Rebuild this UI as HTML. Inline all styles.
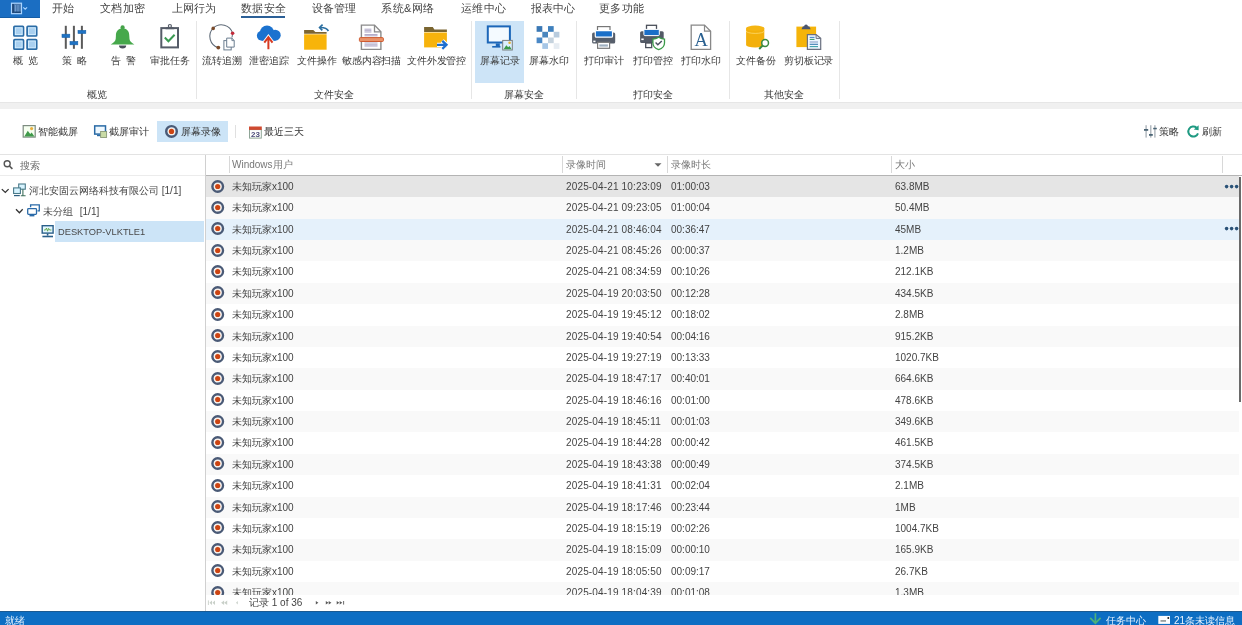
<!DOCTYPE html>
<html><head><meta charset="utf-8">
<style>
*{box-sizing:border-box;margin:0;padding:0}
html,body{width:1242px;height:625px;overflow:hidden;background:#fff;will-change:transform;font-family:"Liberation Sans",sans-serif;font-size:10px;color:#444}
.a{position:absolute}
.t{position:absolute;white-space:nowrap;line-height:12px}
.tab{position:absolute;top:2px;font-size:11px;line-height:13px;color:#444;letter-spacing:0.25px;white-space:nowrap}
.lbl{position:absolute;top:55px;line-height:12px;font-size:10px;color:#3a3a3a;letter-spacing:-0.25px;margin-left:0.4px;white-space:nowrap;text-align:center}
.glbl{position:absolute;top:89px;line-height:12px;font-size:10px;color:#3a3a3a;white-space:nowrap}
.vd{position:absolute;top:21px;width:1px;height:78px;background:#e6e6e6}
svg{position:absolute;overflow:visible}
.row{position:absolute;left:206px;width:1033px;height:21.37px}
.row .c{position:absolute;top:5px;line-height:12px;white-space:nowrap;color:#444}
.hd{position:absolute;top:159px;line-height:12px;color:#777;white-space:nowrap}
.hdv{position:absolute;top:156px;width:1px;height:17px;background:#d8d8d8}
</style></head><body>
<svg width="0" height="0" style="position:absolute"><defs><g id="rec"><circle cx="6.7" cy="6.5" r="5.3" fill="none" stroke="#4a5a76" stroke-width="2.4"/><circle cx="6.7" cy="6.5" r="3.6" fill="#fbefe6"/><circle cx="6.7" cy="6.5" r="2.6" fill="#cc4412"/></g></defs></svg>

<!-- menu button -->
<div class="a" style="left:0;top:0;width:40px;height:18px;background:#1b6ec2;border-bottom:1px solid #155da6"></div>
<svg style="left:0;top:0" width="40" height="18">
 <rect x="11.5" y="3.2" width="10" height="10.5" fill="#4a78ad" stroke="#a9d4ff" stroke-width="1.2"/>
 <rect x="12.4" y="4" width="1.3" height="9" fill="#0f3565"/>
 <path d="M15.5 5 V12 M18 5 V12" stroke="#7aa5d5" stroke-width="0.8"/>
 <rect x="14.2" y="11.6" width="6.5" height="1.2" fill="#123c6e"/>
 <path d="M23.3 7.3 L25.2 9.2 L27.1 7.3" fill="none" stroke="#a9d4ff" stroke-width="1.1"/>
</svg>

<!-- tabs -->
<div class="tab" style="left:52px">开始</div>
<div class="tab" style="left:100px">文档加密</div>
<div class="tab" style="left:171.5px">上网行为</div>
<div class="tab" style="left:241px">数据安全</div>
<div class="a" style="left:241px;top:16px;width:44px;height:2px;background:#2b5f96"></div>
<div class="tab" style="left:311.5px">设备管理</div>
<div class="tab" style="left:381px;letter-spacing:0.5px">系统&amp;网络</div>
<div class="tab" style="left:461px">运维中心</div>
<div class="tab" style="left:530.5px">报表中心</div>
<div class="tab" style="left:599px">更多功能</div>

<!-- ribbon -->
<div class="a" style="left:475px;top:21px;width:49px;height:62px;background:#cde4f7"></div>
<div class="vd" style="left:196px"></div>
<div class="vd" style="left:471px"></div>
<div class="vd" style="left:576px"></div>
<div class="vd" style="left:729px"></div>
<div class="vd" style="left:839px"></div>

<div class="lbl" style="left:13px;letter-spacing:1px">概 览</div>
<div class="lbl" style="left:62px;letter-spacing:1px">策 略</div>
<div class="lbl" style="left:111px;letter-spacing:1px">告 警</div>
<div class="lbl" style="left:150px">审批任务</div>
<div class="lbl" style="left:202px">流转追溯</div>
<div class="lbl" style="left:249px">泄密追踪</div>
<div class="lbl" style="left:297px">文件操作</div>
<div class="lbl" style="left:342px">敏感内容扫描</div>
<div class="lbl" style="left:407px">文件外发管控</div>
<div class="lbl" style="left:480px">屏幕记录</div>
<div class="lbl" style="left:529px">屏幕水印</div>
<div class="lbl" style="left:584px">打印审计</div>
<div class="lbl" style="left:633px">打印管控</div>
<div class="lbl" style="left:681px">打印水印</div>
<div class="lbl" style="left:736px">文件备份</div>
<div class="lbl" style="left:784px">剪切板记录</div>

<div class="glbl" style="left:87px">概览</div>
<div class="glbl" style="left:314px">文件安全</div>
<div class="glbl" style="left:504px">屏幕安全</div>
<div class="glbl" style="left:633px">打印安全</div>
<div class="glbl" style="left:764px">其他安全</div>

<!-- ICONS_RIBBON -->

<!-- band -->
<div class="a" style="left:0;top:102px;width:1242px;height:7px;background:#f0f0f0;border-top:1px solid #e6e6e6"></div>

<!-- toolbar -->
<div class="a" style="left:157px;top:121px;width:71px;height:21px;background:#cce4f7"></div>
<div class="a" style="left:235px;top:125px;width:1px;height:13px;background:#e0e0e0"></div>
<div class="t" style="left:38px;top:126px;color:#333">智能截屏</div>
<div class="t" style="left:109px;top:126px;color:#333">截屏审计</div>
<div class="t" style="left:181px;top:126px;color:#333">屏幕录像</div>
<div class="t" style="left:264px;top:126px;color:#333">最近三天</div>
<div class="t" style="left:1159px;top:126px;color:#333">策略</div>
<div class="t" style="left:1202px;top:126px;color:#333">刷新</div>
<!-- ICONS_TOOLBAR -->

<!-- lines -->
<div class="a" style="left:0;top:154px;width:1242px;height:1px;background:#e3e3e3"></div>

<!-- left panel -->
<div class="t" style="left:20px;top:160px;color:#6a6a6a">搜索</div>
<div class="a" style="left:0;top:175px;width:205px;height:1px;background:#ececec"></div>
<div class="t" style="left:29px;top:185px;color:#444">河北安固云网络科技有限公司 [1/1]</div>
<div class="t" style="left:43px;top:205.5px;color:#444">未分组 <span style="margin-left:4px">[1/1]</span></div>
<div class="a" style="left:55px;top:221px;width:149px;height:21px;background:#cce4f7"></div>
<div class="t" style="left:58px;top:226px;font-size:9.3px;color:#484848">DESKTOP-VLKTLE1</div>
<!-- ICONS_TREE -->

<!-- splitter -->
<div class="a" style="left:205px;top:155px;width:1px;height:456px;background:#d0d0d0"></div>

<!-- table header -->
<div class="hdv" style="left:229px"></div>
<div class="hdv" style="left:562px"></div>
<div class="hdv" style="left:667px"></div>
<div class="hdv" style="left:891px"></div>
<div class="hdv" style="left:1222px"></div>
<div class="hd" style="left:232px">Windows用户</div>
<div class="hd" style="left:566px">录像时间</div>
<div class="hd" style="left:671px">录像时长</div>
<div class="hd" style="left:895px">大小</div>
<svg style="left:654px;top:163px" width="8" height="4"><path d="M0.5 0.3 L7.5 0.3 L4 3.8Z" fill="#666"/></svg>
<div class="a" style="left:206px;top:175px;width:1036px;height:1px;background:#b4b4b4"></div>

<!-- rows -->
<div class="a" id="rows" style="left:0;top:0;width:1242px;height:595px;overflow:hidden">
<div class="row" style="top:176.00px;background:#e5e5e5"><svg class="rec" style="left:5px;top:3.5px" width="14" height="14"><use href="#rec"/></svg><div class="c" style="left:26px">未知玩家x100</div><div class="c" style="left:360px;letter-spacing:0.15px">2025-04-21 10:23:09</div><div class="c" style="left:465px">01:00:03</div><div class="c" style="left:689px">63.8MB</div><svg class="dots" style="left:1019px;top:8.5px" width="14" height="4"><circle cx="1.6" cy="1.6" r="1.8" fill="#2a5277"/><circle cx="6.6" cy="1.6" r="1.8" fill="#2a5277"/><circle cx="11.6" cy="1.6" r="1.8" fill="#2a5277"/></svg></div>
<div class="row" style="top:197.37px;background:#f9f9f9"><svg class="rec" style="left:5px;top:3.5px" width="14" height="14"><use href="#rec"/></svg><div class="c" style="left:26px">未知玩家x100</div><div class="c" style="left:360px;letter-spacing:0.15px">2025-04-21 09:23:05</div><div class="c" style="left:465px">01:00:04</div><div class="c" style="left:689px">50.4MB</div></div>
<div class="row" style="top:218.74px;background:#e5f1fb"><svg class="rec" style="left:5px;top:3.5px" width="14" height="14"><use href="#rec"/></svg><div class="c" style="left:26px">未知玩家x100</div><div class="c" style="left:360px;letter-spacing:0.15px">2025-04-21 08:46:04</div><div class="c" style="left:465px">00:36:47</div><div class="c" style="left:689px">45MB</div><svg class="dots" style="left:1019px;top:8.5px" width="14" height="4"><circle cx="1.6" cy="1.6" r="1.8" fill="#2a5277"/><circle cx="6.6" cy="1.6" r="1.8" fill="#2a5277"/><circle cx="11.6" cy="1.6" r="1.8" fill="#2a5277"/></svg></div>
<div class="row" style="top:240.11px;background:#f9f9f9"><svg class="rec" style="left:5px;top:3.5px" width="14" height="14"><use href="#rec"/></svg><div class="c" style="left:26px">未知玩家x100</div><div class="c" style="left:360px;letter-spacing:0.15px">2025-04-21 08:45:26</div><div class="c" style="left:465px">00:00:37</div><div class="c" style="left:689px">1.2MB</div></div>
<div class="row" style="top:261.48px;background:#ffffff"><svg class="rec" style="left:5px;top:3.5px" width="14" height="14"><use href="#rec"/></svg><div class="c" style="left:26px">未知玩家x100</div><div class="c" style="left:360px;letter-spacing:0.15px">2025-04-21 08:34:59</div><div class="c" style="left:465px">00:10:26</div><div class="c" style="left:689px">212.1KB</div></div>
<div class="row" style="top:282.85px;background:#f9f9f9"><svg class="rec" style="left:5px;top:3.5px" width="14" height="14"><use href="#rec"/></svg><div class="c" style="left:26px">未知玩家x100</div><div class="c" style="left:360px;letter-spacing:0.15px">2025-04-19 20:03:50</div><div class="c" style="left:465px">00:12:28</div><div class="c" style="left:689px">434.5KB</div></div>
<div class="row" style="top:304.22px;background:#ffffff"><svg class="rec" style="left:5px;top:3.5px" width="14" height="14"><use href="#rec"/></svg><div class="c" style="left:26px">未知玩家x100</div><div class="c" style="left:360px;letter-spacing:0.15px">2025-04-19 19:45:12</div><div class="c" style="left:465px">00:18:02</div><div class="c" style="left:689px">2.8MB</div></div>
<div class="row" style="top:325.59px;background:#f9f9f9"><svg class="rec" style="left:5px;top:3.5px" width="14" height="14"><use href="#rec"/></svg><div class="c" style="left:26px">未知玩家x100</div><div class="c" style="left:360px;letter-spacing:0.15px">2025-04-19 19:40:54</div><div class="c" style="left:465px">00:04:16</div><div class="c" style="left:689px">915.2KB</div></div>
<div class="row" style="top:346.96px;background:#ffffff"><svg class="rec" style="left:5px;top:3.5px" width="14" height="14"><use href="#rec"/></svg><div class="c" style="left:26px">未知玩家x100</div><div class="c" style="left:360px;letter-spacing:0.15px">2025-04-19 19:27:19</div><div class="c" style="left:465px">00:13:33</div><div class="c" style="left:689px">1020.7KB</div></div>
<div class="row" style="top:368.33px;background:#f9f9f9"><svg class="rec" style="left:5px;top:3.5px" width="14" height="14"><use href="#rec"/></svg><div class="c" style="left:26px">未知玩家x100</div><div class="c" style="left:360px;letter-spacing:0.15px">2025-04-19 18:47:17</div><div class="c" style="left:465px">00:40:01</div><div class="c" style="left:689px">664.6KB</div></div>
<div class="row" style="top:389.70px;background:#ffffff"><svg class="rec" style="left:5px;top:3.5px" width="14" height="14"><use href="#rec"/></svg><div class="c" style="left:26px">未知玩家x100</div><div class="c" style="left:360px;letter-spacing:0.15px">2025-04-19 18:46:16</div><div class="c" style="left:465px">00:01:00</div><div class="c" style="left:689px">478.6KB</div></div>
<div class="row" style="top:411.07px;background:#f9f9f9"><svg class="rec" style="left:5px;top:3.5px" width="14" height="14"><use href="#rec"/></svg><div class="c" style="left:26px">未知玩家x100</div><div class="c" style="left:360px;letter-spacing:0.15px">2025-04-19 18:45:11</div><div class="c" style="left:465px">00:01:03</div><div class="c" style="left:689px">349.6KB</div></div>
<div class="row" style="top:432.44px;background:#ffffff"><svg class="rec" style="left:5px;top:3.5px" width="14" height="14"><use href="#rec"/></svg><div class="c" style="left:26px">未知玩家x100</div><div class="c" style="left:360px;letter-spacing:0.15px">2025-04-19 18:44:28</div><div class="c" style="left:465px">00:00:42</div><div class="c" style="left:689px">461.5KB</div></div>
<div class="row" style="top:453.81px;background:#f9f9f9"><svg class="rec" style="left:5px;top:3.5px" width="14" height="14"><use href="#rec"/></svg><div class="c" style="left:26px">未知玩家x100</div><div class="c" style="left:360px;letter-spacing:0.15px">2025-04-19 18:43:38</div><div class="c" style="left:465px">00:00:49</div><div class="c" style="left:689px">374.5KB</div></div>
<div class="row" style="top:475.18px;background:#ffffff"><svg class="rec" style="left:5px;top:3.5px" width="14" height="14"><use href="#rec"/></svg><div class="c" style="left:26px">未知玩家x100</div><div class="c" style="left:360px;letter-spacing:0.15px">2025-04-19 18:41:31</div><div class="c" style="left:465px">00:02:04</div><div class="c" style="left:689px">2.1MB</div></div>
<div class="row" style="top:496.55px;background:#f9f9f9"><svg class="rec" style="left:5px;top:3.5px" width="14" height="14"><use href="#rec"/></svg><div class="c" style="left:26px">未知玩家x100</div><div class="c" style="left:360px;letter-spacing:0.15px">2025-04-19 18:17:46</div><div class="c" style="left:465px">00:23:44</div><div class="c" style="left:689px">1MB</div></div>
<div class="row" style="top:517.92px;background:#ffffff"><svg class="rec" style="left:5px;top:3.5px" width="14" height="14"><use href="#rec"/></svg><div class="c" style="left:26px">未知玩家x100</div><div class="c" style="left:360px;letter-spacing:0.15px">2025-04-19 18:15:19</div><div class="c" style="left:465px">00:02:26</div><div class="c" style="left:689px">1004.7KB</div></div>
<div class="row" style="top:539.29px;background:#f9f9f9"><svg class="rec" style="left:5px;top:3.5px" width="14" height="14"><use href="#rec"/></svg><div class="c" style="left:26px">未知玩家x100</div><div class="c" style="left:360px;letter-spacing:0.15px">2025-04-19 18:15:09</div><div class="c" style="left:465px">00:00:10</div><div class="c" style="left:689px">165.9KB</div></div>
<div class="row" style="top:560.66px;background:#ffffff"><svg class="rec" style="left:5px;top:3.5px" width="14" height="14"><use href="#rec"/></svg><div class="c" style="left:26px">未知玩家x100</div><div class="c" style="left:360px;letter-spacing:0.15px">2025-04-19 18:05:50</div><div class="c" style="left:465px">00:09:17</div><div class="c" style="left:689px">26.7KB</div></div>
<div class="row" style="top:582.03px;background:#f9f9f9"><svg class="rec" style="left:5px;top:3.5px" width="14" height="14"><use href="#rec"/></svg><div class="c" style="left:26px">未知玩家x100</div><div class="c" style="left:360px;letter-spacing:0.15px">2025-04-19 18:04:39</div><div class="c" style="left:465px">00:01:08</div><div class="c" style="left:689px">1.3MB</div></div>
</div>
<div class="a" style="left:1239px;top:177px;width:1.5px;height:225px;background:#6a6a6a"></div>

<!-- pager -->
<div class="t" style="left:249px;top:597px">记录 1 of 36</div>
<!-- ICONS_PAGER -->

<!-- status bar -->
<div class="a" style="left:0;top:611px;width:1242px;height:14px;background:#0d6ec3;border-top:1px solid #1a5a92"></div>
<div class="t" style="left:5px;top:615px;color:#eaf4ff">就绪</div>
<div class="t" style="left:1106px;top:615px;color:#eaf4ff">任务中心</div>
<div class="t" style="left:1174px;top:615px;color:#eaf4ff">21条未读信息</div>
<!-- ICONS_STATUS -->

<svg style="left:0;top:0" width="1242" height="625">
<!-- 1 grid -->
<g stroke="#2b6ca6" stroke-width="1.7" fill="#a9d0f0">
<rect x="13.9" y="26.4" width="9.6" height="9.6" rx="0.8"/>
<rect x="27.1" y="26.4" width="9.6" height="9.6" rx="0.8"/>
<rect x="13.9" y="39.6" width="9.6" height="9.6" rx="0.8"/>
<rect x="27.1" y="39.6" width="9.6" height="9.6" rx="0.8"/>
</g>
<g stroke="#d9f1ff" stroke-width="0.8" fill="none">
<rect x="15.3" y="27.8" width="6.8" height="6.8"/>
<rect x="28.5" y="27.8" width="6.8" height="6.8"/>
<rect x="15.3" y="41" width="6.8" height="6.8"/>
<rect x="28.5" y="41" width="6.8" height="6.8"/>
</g>
<!-- 2 sliders -->
<g fill="#5b5b5b"><rect x="64.8" y="25.8" width="2" height="23"/><rect x="72.9" y="25.8" width="2" height="23"/><rect x="80.9" y="25.8" width="2" height="23"/></g>
<g fill="#1f73c4" stroke="#1a62a8" stroke-width="0.6"><rect x="62" y="34.2" width="7.8" height="3.3"/><rect x="70" y="41.5" width="7.8" height="3.3"/><rect x="78" y="30.4" width="7.8" height="3.1"/></g>
<!-- 3 bell -->
<circle cx="122.6" cy="27.4" r="2.1" fill="#45a24a"/>
<path d="M122.6 28.2 C117.6 28.6 115.9 31.6 115.9 36 L115.7 39 C115.3 41.6 113.4 42.6 110.7 44.6 L134.4 44.6 C131.7 42.6 129.8 41.6 129.5 39 L129.3 36 C129.3 31.6 127.6 28.6 122.6 28.2 Z" fill="#46a84b"/>
<path d="M119 45.6 A3.6 3 0 0 0 126.2 45.6 Z" fill="#4b505c"/>
<!-- 4 clipboard -->
<rect x="161.3" y="28.1" width="16.7" height="19.3" fill="#fff" stroke="#555c68" stroke-width="2"/>
<path d="M165.5 29.3 L166.6 27 L173.2 27 L174.3 29.3 Z" fill="#555c68"/>
<circle cx="169.9" cy="26" r="1.5" fill="none" stroke="#555c68" stroke-width="1.2"/>
<path d="M164.8 37.5 L168.4 41.2 L174.6 34.8" fill="none" stroke="#3a9a52" stroke-width="2"/>
<!-- 5 flow -->
<path d="M218.3 47.6 A11.6 11.6 0 1 1 232.6 33.3" fill="none" stroke="#5f6b78" stroke-width="1.1"/>
<path d="M232.6 33.3 L232 37.5" fill="none" stroke="#5f6b78" stroke-width="1"/>
<circle cx="213.2" cy="28.4" r="1.8" fill="#7a4a2a"/>
<circle cx="218.3" cy="47.6" r="1.9" fill="#7a4a2a"/>
<circle cx="232.6" cy="33.3" r="1.8" fill="#c22a3a"/>
<rect x="223.9" y="40.6" width="7.3" height="9.3" fill="#fff" stroke="#6b7d8f" stroke-width="1"/>
<path d="M226.7 38.1 L231.9 38.1 L234.2 40.6 L234.2 47.1 L226.7 47.1 Z" fill="#fff" stroke="#6b7d8f" stroke-width="1"/>
<path d="M231.9 38.1 L231.9 40.6 L234.2 40.6" fill="none" stroke="#6b7d8f" stroke-width="0.9"/>
<!-- 6 cloud -->
<g fill="#1b72cf"><circle cx="267" cy="32.4" r="7"/><circle cx="261.9" cy="35.7" r="5"/><circle cx="275.2" cy="35.2" r="5.5"/><rect x="261.9" y="34" width="13.5" height="6.7"/></g>
<path d="M268.4 49.2 L268.4 37.5 M264.3 42.6 L268.4 37.2 L272.5 42.6" fill="none" stroke="#fff" stroke-width="4"/>
<path d="M268.4 49.2 L268.4 37.5 M264.3 42.6 L268.4 37.2 L272.5 42.6" fill="none" stroke="#d63a22" stroke-width="2"/>
<!-- 7 folder op -->
<path d="M304.1 30 L313.3 30 L315.4 32 L326.6 32 L326.6 33.8 L304.1 33.8 Z" fill="#7d6530"/>
<rect x="304.1" y="34.3" width="22.5" height="15.4" fill="#f8b40a"/>
<path d="M328.4 31 C327 28.2 325 27.4 320.3 27.5" fill="none" stroke="#2a6ea0" stroke-width="1.7"/>
<path d="M322.6 24.6 L319.6 27.5 L322.3 30.4" fill="none" stroke="#2a6ea0" stroke-width="1.7"/>
<!-- 8 doc scan -->
<path d="M361.4 25.1 L374.5 25.1 L380.9 31.8 L380.9 49.4 L361.4 49.4 Z" fill="#fff" stroke="#8a8a8a" stroke-width="1.4"/>
<path d="M374.5 25.1 L374.5 31.8 L380.9 31.8" fill="none" stroke="#8a8a8a" stroke-width="1.3"/>
<g stroke="#a49cc0" stroke-width="0.9"><path d="M364.5 29.2 H371.4 M364.5 30.7 H371.4 M364.5 32 H371.4 M364.5 34.6 H377.5 M364.5 35.8 H377.5 M364.5 43 H377.5 M364.5 44.8 H377.5 M364.5 46 H377.5"/></g>
<rect x="359.4" y="37.6" width="24" height="3.9" rx="1" fill="#e8936a" stroke="#cf5b30" stroke-width="1"/>
<!-- 9 folder send -->
<path d="M424.1 27.1 L432.8 27.1 L434.4 29.4 L446.9 29.4 L446.9 32 L424.1 32 Z" fill="#7a6530"/>
<rect x="424.1" y="32.5" width="22.8" height="14.9" fill="#f7b30c"/>
<path d="M437 44.8 L446.3 44.8 M442.3 40.8 L446.5 44.8 L442.3 48.8" fill="none" stroke="#fff" stroke-width="4.2"/>
<path d="M437 44.8 L446.3 44.8 M442.3 40.8 L446.5 44.8 L442.3 48.8" fill="none" stroke="#1d6fd0" stroke-width="2.3"/>
<!-- 10 monitor -->
<rect x="487.8" y="26.4" width="22.1" height="16.1" fill="#f4faff" stroke="#1c66b8" stroke-width="2"/>
<rect x="495.8" y="43.4" width="4" height="2.8" fill="#1c66b8"/>
<rect x="492.2" y="46" width="8.2" height="1.6" fill="#1c66b8"/>
<rect x="502.7" y="40.4" width="9.6" height="9.6" fill="#dcefff" stroke="#7a7f80" stroke-width="1"/>
<path d="M503.6 49.3 L506.3 45.2 L508.2 47.3 L509.5 46 L511.6 49.3 Z" fill="#3a9a48"/>
<circle cx="509.6" cy="42.8" r="1.3" fill="#e8b030"/>
<!-- 11 mosaic -->
<rect x="536.6" y="26.1" width="5.7" height="5.7" fill="#3a78b5"/>
<rect x="548" y="26.1" width="5.7" height="5.7" fill="#3f80bd"/>
<rect x="542.3" y="31.8" width="5.7" height="5.7" fill="#4a86be"/>
<rect x="553.7" y="31.8" width="5.7" height="5.7" fill="#b8cbdd"/>
<rect x="536.6" y="37.5" width="5.7" height="5.7" fill="#4a88c6"/>
<rect x="548" y="37.5" width="5.7" height="5.7" fill="#c5d2dd"/>
<rect x="542.3" y="43.2" width="5.7" height="5.7" fill="#a6c6e6"/>
<rect x="553.7" y="43.2" width="5.7" height="5.7" fill="#e6ecf2"/>
<!-- 12 printer -->
<rect x="597.5" y="26.6" width="12.5" height="5" fill="#fff" stroke="#777" stroke-width="1.2"/>
<rect x="592.1" y="32.5" width="23.1" height="11" rx="1.5" fill="#565e6b"/>
<rect x="595.3" y="30.6" width="17.2" height="6.6" rx="1" fill="#1a6fc8" stroke="#fff" stroke-width="1.2"/>
<rect x="593.3" y="40.6" width="2.2" height="1.6" fill="#fff"/>
<rect x="597.6" y="42.3" width="12" height="6" fill="#fff" stroke="#777" stroke-width="1.2"/>
<rect x="599.3" y="44.4" width="8.6" height="2.2" fill="#9fb0c0"/>
<!-- 13 printer shield -->
<rect x="646.5" y="25.3" width="10" height="5" fill="#fff" stroke="#4a4f5a" stroke-width="1.3"/>
<rect x="640.1" y="31.2" width="23.6" height="11.8" rx="1.5" fill="#535a66"/>
<rect x="643.9" y="29.4" width="15.4" height="6.2" rx="1" fill="#1a6fc8" stroke="#fff" stroke-width="1"/>
<rect x="641.3" y="38.5" width="2.4" height="1.6" fill="#fff"/>
<rect x="645.7" y="43" width="6" height="4.6" fill="#fff" stroke="#4a4f5a" stroke-width="1.3"/>
<path d="M658.7 37.3 C656.5 38.7 654.5 39.2 652.9 39.2 L652.9 43 C652.9 46.5 655.5 48.6 658.7 49.6 C661.9 48.6 664.5 46.5 664.5 43 L664.5 39.2 C662.9 39.2 660.9 38.7 658.7 37.3 Z" fill="#fff" stroke="#3a9a48" stroke-width="1.3"/>
<path d="M655.6 42.6 L657.8 44.8 L661.8 40.9" fill="none" stroke="#4a4f60" stroke-width="1.4"/>
<!-- 14 doc A -->
<path d="M691.2 25.1 L704.5 25.1 L710.6 31.2 L710.6 49.4 L691.2 49.4 Z" fill="#fff" stroke="#888" stroke-width="1.3"/>
<path d="M704.5 25.1 L704.5 31.2 L710.6 31.2" fill="none" stroke="#888" stroke-width="1.2"/>
<text x="701.2" y="45.6" text-anchor="middle" font-family="Liberation Serif" font-size="18.5" fill="#2a6090">A</text>
<!-- 15 database -->
<path d="M746.1 28.3 L746.1 45 A9.1 2.4 0 0 0 764.3 45 L764.3 28.3 Z" fill="#f3b00a"/>
<ellipse cx="755.2" cy="28.3" rx="9.2" ry="2.7" fill="#f5b512"/>
<path d="M746.1 31 A9.1 2.4 0 0 0 764.3 31" fill="none" stroke="#ffe07a" stroke-width="0.7"/>
<circle cx="765.1" cy="43" r="3.4" fill="#fff" stroke="#3a8a40" stroke-width="1.5"/>
<path d="M762.8 45.4 L759.2 49" stroke="#3a8a40" stroke-width="2"/>
<!-- 16 clipboard doc -->
<rect x="796.4" y="26.6" width="19.7" height="20.5" fill="#f5b40a"/>
<path d="M801.5 29.2 L802.8 26.6 L804.2 26.3 A1.8 1.8 0 0 1 807.9 26.3 L809.3 26.6 L810.7 29.2 Z" fill="#4a5570"/>
<path d="M807.4 34.6 L816.1 34.6 L820.7 38.4 L820.7 49.4 L807.4 49.4 Z" fill="#eef6ff" stroke="#6a7080" stroke-width="1.2"/>
<path d="M816.1 34.6 L816.1 38.4 L820.7 38.4" fill="none" stroke="#6a7080" stroke-width="1"/>
<g stroke-width="1.1"><path d="M809.7 37.4 H814.5" stroke="#4a8ac8"/><path d="M809.7 39.4 H814.5" stroke="#3a9a70"/><path d="M809.7 42 H818" stroke="#8aa0c8"/><path d="M809.7 44.3 H818" stroke="#3a7ab0"/><path d="M809.7 46.6 H818" stroke="#3aa0a8"/></g>

<!-- toolbar icons -->
<rect x="23.2" y="125.6" width="12" height="11.5" fill="#f6fff0" stroke="#7d8c80" stroke-width="1.2"/>
<path d="M24.3 136.4 L27.8 130.8 L30.2 134 L31.7 132.4 L34.4 136.4 Z" fill="#3f9a4a"/>
<circle cx="31.6" cy="128.6" r="1.6" fill="#e8b040"/>
<rect x="94.7" y="125.9" width="10.8" height="8.2" fill="#eef8ff" stroke="#2a6aa5" stroke-width="1.5"/>
<rect x="97" y="134.8" width="4" height="1.4" fill="#2a6aa5"/>
<rect x="100.6" y="131.5" width="6" height="6" fill="#c9dba6" stroke="#8a9a78" stroke-width="0.9"/>
<use href="#rec" x="164.8" y="124.9"/>
<rect x="249.5" y="129.6" width="11.8" height="8.5" fill="#fff" stroke="#8fa597" stroke-width="1"/>
<rect x="249" y="126.5" width="12.8" height="3.4" fill="#cf4a30"/>
<text x="255.4" y="137.3" text-anchor="middle" font-family="Liberation Sans" font-size="8" font-weight="bold" fill="#4d4d7a">23</text>
<g fill="#a0a8b0"><rect x="1145.5" y="125.2" width="1.2" height="12.4"/><rect x="1150.2" y="125.2" width="1.2" height="12.4"/><rect x="1154.3" y="125.2" width="1.2" height="12.4"/></g>
<g fill="#4a6474"><rect x="1144" y="129" width="4.2" height="1.8"/><rect x="1149" y="134" width="3.8" height="1.8"/><rect x="1153.2" y="127.8" width="3.6" height="1.5"/></g>
<path d="M1198 133.3 A5 5 0 1 1 1196.6 127.8" fill="none" stroke="#1f9a82" stroke-width="2"/>
<path d="M1198.6 125.3 L1198.6 130.3 L1193.8 129.6 Z" fill="#1f9a82"/>

<!-- search -->
<circle cx="7.2" cy="163.8" r="3" fill="none" stroke="#555" stroke-width="1.4"/>
<path d="M9.4 166 L12.4 168.9" stroke="#555" stroke-width="1.6"/>
<!-- tree icons -->
<path d="M1.8 189.1 L5.3 192.4 L8.6 189.1" fill="none" stroke="#333" stroke-width="1.3"/>
<path d="M16 209.3 L19.4 212.7 L22.7 209.3" fill="none" stroke="#333" stroke-width="1.3"/>
<rect x="18.7" y="184" width="6.6" height="5.2" fill="#d8f4ff" stroke="#4a7a8a" stroke-width="1.1"/>
<path d="M22.9 189.3 V195.4 M20.8 195.8 H25.6" stroke="#3d6f5a" stroke-width="1.1"/>
<rect x="13.6" y="187.9" width="6.8" height="5.6" fill="#d8f4ff" stroke="#4a7a8a" stroke-width="1.1"/>
<path d="M14 195.6 H19.8" stroke="#2d5f80" stroke-width="1.2"/>
<path d="M30.6 207.2 V204.8 H39.3 V210.8 H37.5" fill="none" stroke="#2a6aa8" stroke-width="1.3"/>
<rect x="27.7" y="208.7" width="8.8" height="5.6" rx="0.8" fill="#fff" stroke="#2a6aa8" stroke-width="1.3"/>
<path d="M29.5 215.6 H34.4" stroke="#2a6aa8" stroke-width="1.6"/>
<rect x="42.2" y="225.7" width="10.9" height="7.4" fill="#e4f7ff" stroke="#2a5f8a" stroke-width="1.4"/>
<path d="M44 230 L45.5 230 L46.5 228 L47.6 231.2 L48.6 228.4 L49.6 230 L51.4 230" fill="none" stroke="#5aa040" stroke-width="0.9"/>
<path d="M47.6 233.4 V235.6" stroke="#2a5f8a" stroke-width="1.6"/>
<path d="M42.4 236.5 H53" stroke="#2a5f8a" stroke-width="1.6"/>

<!-- pager icons -->
<g fill="#c9d0c9">
<rect x="207.9" y="600.4" width="0.9" height="4.6"/><path d="M212 600.4 L209.5 602.7 L212 605 Z M215 600.4 L212.5 602.7 L215 605 Z"/>
<path d="M224.1 600.4 L221.1 602.7 L224.1 605 Z M227.2 600.4 L224.2 602.7 L227.2 605 Z"/>
<path d="M237.8 601 L236 602.8 L237.8 604.6 Z"/>
</g>
<g fill="#5a5a5a">
<path d="M315.8 601 L318.4 602.8 L315.8 604.6 Z"/>
<path d="M325.8 601 L328.5 602.8 L325.8 604.6 Z M328.7 601 L331.4 602.8 L328.7 604.6 Z"/>
<path d="M336.7 601 L339.3 602.8 L336.7 604.6 Z M339.7 601 L342.3 602.8 L339.7 604.6 Z"/><rect x="343.2" y="601" width="0.9" height="3.6"/>
</g>

<!-- status icons -->
<path d="M1095.4 613.2 V623.5 M1090.2 617.9 L1095.4 623.2 L1100.6 617.9" fill="none" stroke="#4cb07a" stroke-width="1.7"/>
<rect x="1158.3" y="615.9" width="11.7" height="8" fill="#fafcff"/>
<rect x="1160.5" y="620" width="5.5" height="1.8" fill="#9aa0a0"/>
<rect x="1167.5" y="617" width="1.6" height="2" fill="#333"/>
</svg>

</body></html>
